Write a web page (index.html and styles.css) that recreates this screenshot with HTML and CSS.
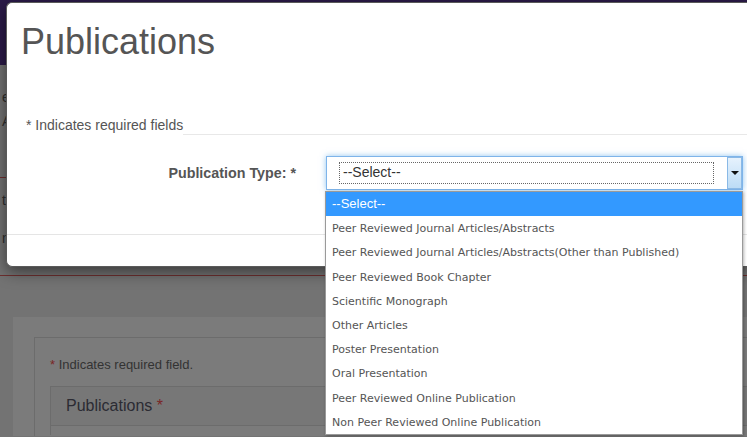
FILE: index.html
```html
<!DOCTYPE html>
<html>
    <head>
        <meta name="viewport" content="width=device-width, initial-scale=1">
        <link rel="stylesheet" href="styles.css">
    </head>
    <body>
        <div class="page">
            <div class="top-bar"></div>
            <div class="page-head">
                <p class="head-line">e</p>
                <p class="head-line">A.</p>
            </div>
            <div class="page-nav">
                <p class="nav-line">t</p>
                <p class="nav-line">n</p>
            </div>
            <div class="panel">
                <div class="panel-box">
                    <p class="panel-note"><span class="req">*</span> Indicates required field.</p>
                    <div class="pub-box">
                        <div class="pub-head">Publications <span class="req">*</span></div>
                    </div>
                </div>
            </div>
        </div>

        <div class="modal">
            <div class="modal-header">
                <h1 class="modal-title">Publications</h1>
            </div>
            <div class="modal-body">
                <div class="legend">
                    <span class="legend-text">* Indicates required fields</span>
                    <span class="legend-line"></span>
                </div>
                <div class="form-row">
                    <label class="form-label">Publication Type: *</label>
                    <div class="select">
                        <div class="select-value">--Select--</div>
                        <div class="select-button"><span class="arrow"></span></div>
                        <ul class="select-list">
                            <li class="option selected">--Select--</li>
                            <li class="option">Peer Reviewed Journal Articles/Abstracts</li>
                            <li class="option">Peer Reviewed Journal Articles/Abstracts(Other than Published)</li>
                            <li class="option">Peer Reviewed Book Chapter</li>
                            <li class="option">Scientific Monograph</li>
                            <li class="option">Other Articles</li>
                            <li class="option">Poster Presentation</li>
                            <li class="option">Oral Presentation</li>
                            <li class="option">Peer Reviewed Online Publication</li>
                            <li class="option">Non Peer Reviewed Online Publication</li>
                        </ul>
                    </div>
                </div>
            </div>
            <div class="modal-footer"></div>
        </div>
    </body>
</html>
```

FILE: styles.css
```css
html, body {
margin: 0;
padding: 0;
overflow: hidden;
height: 100%;
}

body {
background-color: #737373;
font-family: "Liberation Sans", Arial, sans-serif;
position: relative;
}

/* page behind the backdrop (already dimmed colours) */
.top-bar {
height: 65px;
background-color: #2b1a48;
}

.page-head {
height: 113px;
border-bottom: 1px solid #6e2f2f;
box-sizing: border-box;
padding-top: 24px;
padding-left: 2px;
}

.head-line {
margin: 0 0 8px 0;
font-size: 14px;
line-height: 16px;
color: #2e2e2e;
}

.page-nav {
height: 98px;
border-bottom: 1px solid #6e2f2f;
box-sizing: border-box;
padding-top: 14px;
padding-left: 2px;
}

.nav-line {
margin: 0 0 22px 0;
font-size: 14px;
line-height: 16px;
color: #2e2e2e;
}

.panel {
margin: 41px 0 0 13px;
padding: 20px 0 0 21px;
background-color: #7b7b7b;
height: 99px;
}

.panel-box {
border: 1px solid #6c6c6c;
border-right: none;
border-bottom: none;
padding: 18px 0 0 15px;
height: 99px;
box-sizing: border-box;
overflow: hidden;
}

.panel-note {
margin: 0;
font-size: 13px;
line-height: 18px;
color: #333333;
}

.req {
color: #7a2626;
}

.pub-box {
margin-top: 12px;
border: 1px solid #6c6c6c;
border-right: none;
border-bottom: none;
height: 49px;
box-sizing: border-box;
}

.pub-head {
height: 39px;
line-height: 38px;
padding-left: 15px;
font-size: 16px;
color: #2b2b33;
background-color: #777777;
border-bottom: 1px solid #6c6c6c;
box-sizing: border-box;
}

/* modal */
.modal {
position: absolute;
top: 2px;
left: 6px;
right: 0;
height: 265px;
background-color: white;
border: 1px solid #5a5a5a;
border-right: none;
border-radius: 6px 0 0 6px;
box-shadow: 0 5px 15px rgba(0, 0, 0, 0.5);
box-sizing: border-box;
display: flex;
flex-direction: column;
}

.modal-header {
padding: 19px 14px 0 14px;
}

.modal-title {
margin: 0;
font-size: 36px;
line-height: 40px;
font-weight: normal;
color: #555555;
}

.modal-body {
padding: 0 0 0 19px;
}

.legend {
display: flex;
margin-top: 53px;
height: 20px;
}

.legend-text {
font-size: 14px;
line-height: 20px;
color: #555555;
white-space: nowrap;
}

.legend-line {
flex: 1;
height: 19px;
border-bottom: 1px solid #e8e8e8;
}

.form-row {
display: flex;
align-items: center;
margin-top: 21px;
}

.form-label {
width: 270px;
margin-right: 30px;
text-align: right;
font-size: 14.3px;
font-weight: bold;
color: #555555;
}

.select {
position: relative;
display: flex;
width: 417px;
height: 34px;
box-sizing: border-box;
border: 1px solid #7eb4ea;
box-shadow: 0 0 6px rgba(102, 175, 233, 0.7);
background-color: white;
}

.select-value {
flex: 1;
margin: 5px 13px 5px 12px;
border: 1px dotted #666666;
padding-left: 3px;
font-size: 14px;
line-height: 18px;
color: #333333;
}

.select-button {
width: 15px;
box-sizing: border-box;
border: 1px solid #8ab9e6;
background: linear-gradient(#e6f2fd, #bcdcf6);
display: flex;
align-items: center;
justify-content: center;
}

.arrow {
width: 0;
height: 0;
border-left: 4px solid transparent;
border-right: 4px solid transparent;
border-top: 4px solid #111111;
}

.select-list {
position: absolute;
top: 34px;
left: -2px;
width: 418px;
margin: 0;
padding: 0;
list-style: none;
background-color: white;
border: 1px solid #9a9a9a;
box-sizing: border-box;
box-shadow: 1px 1px 3px rgba(0, 0, 0, 0.3);
}

.option {
height: 24.2px;
line-height: 25px;
padding-left: 6px;
font-family: "DejaVu Sans", Verdana, sans-serif;
font-size: 11px;
color: #555555;
white-space: nowrap;
}

.option.selected {
line-height: 24.2px;
background-color: #3399ff;
color: white;
font-family: "Liberation Sans", Arial, sans-serif;
font-size: 13px;
}

.modal-footer {
margin-top: auto;
height: 31px;
border-top: 1px solid #e5e5e5;
}
```
